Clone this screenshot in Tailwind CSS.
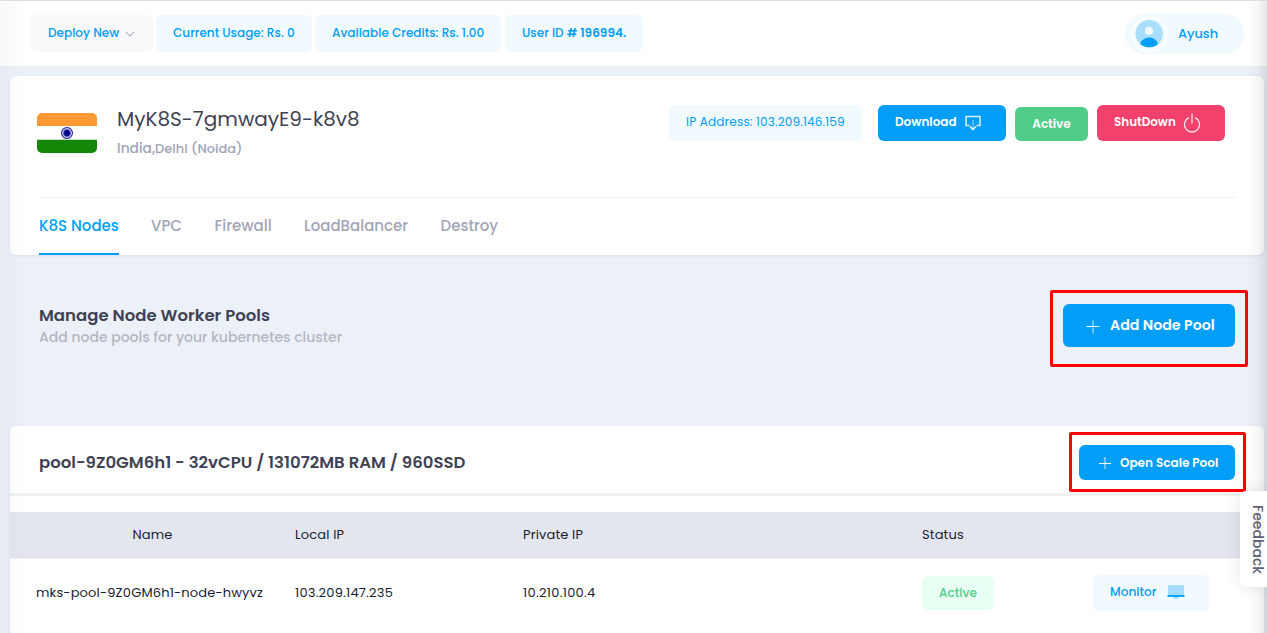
<!DOCTYPE html>
<html lang="en">
<head>
<meta charset="utf-8">
<title>Kubernetes cluster</title>
<script src="https://cdn.jsdelivr.net/npm/@tailwindcss/browser@4"></script>
</head>
<body class="relative flex h-[633px] w-[1267px] flex-col overflow-hidden bg-[#ecf1f8] font-[Poppins,Inter,sans-serif] text-[13px] whitespace-nowrap text-[#181c32]">

<header class="flex h-[66px] shrink-0 justify-between border-t border-[#dedede] bg-white pr-[23px] pl-[30px] text-[12.050px] font-medium text-[#009ef7]">
  <div class="flex pt-[14px]">
    <button class="mr-[3px] flex h-[37px] w-[123px] items-center rounded-md bg-[#f8f9fb] pb-px pl-[18px]">Deploy New
      <svg class="mt-[2px] ml-[6px] h-[6px] w-[10px]" viewBox="0 0 10 6" fill="none" stroke="#b3b6c9" stroke-width="1.1"><path d="M.7.8 5 4.9 9.3.8"/></svg>
    </button>
    <div class="mr-[3px] flex h-[37px] w-[156px] items-center rounded-md bg-[#f1faff] pb-px pl-[17px]">Current Usage: Rs. 0</div>
    <div class="mr-[4px] flex h-[37px] w-[186px] items-center rounded-md bg-[#f1faff] pb-px pl-[17px]">Available Credits: Rs. 1.00</div>
    <div class="flex h-[37px] w-[138px] items-center rounded-md bg-[#f1faff] pb-px pl-[17px]">User ID<span class="ml-[3px] font-semibold"># 196994.</span></div>
  </div>
  <div class="mt-[13px] flex h-[40px] w-[119px] items-center rounded-full bg-[#f1faff] pl-[6px]">
    <svg class="h-[37px] w-[37px]" viewBox="0 0 37 37"><circle cx="18.5" cy="18.5" r="18.2" fill="#fbfeff"/><circle cx="18.5" cy="18.5" r="15.8" fill="#f1faff"/><circle cx="18.2" cy="17.700" r="13.7" fill="#a9defc"/><circle cx="18" cy="14.900" r="4.2" fill="#f1faff"/><path d="M9.2 27.900c1.4-3.900 4.900-6.300 8.900-6.300s7.700 2.400 9 6.300a13.700 13.700 0 0 1-17.900 0z" fill="#009ef7"/></svg>
    <span class="ml-[10px] pb-px text-[12.9px]">Ayush</span>
  </div>
</header>

<section class="mt-[10px] mr-[3px] ml-[10px] h-[179px] shrink-0 rounded-md bg-white pr-[29px] pl-[27px] shadow-[0_1px_3px_rgba(60,70,120,0.1)]">
  <div class="flex h-[121px] items-start">
    <svg class="mt-[37px] h-[40px] w-[60px] overflow-hidden rounded-[5px]" viewBox="0 0 60 40"><path fill="#fff" d="M0 0h60v40H0z"/><path fill="#ff9933" d="M0 0h60v13H0z"/><path fill="#138808" d="M0 26.700h60V40H0z"/><circle cx="30" cy="20" r="5.400" fill="#fff" stroke="#20209a" stroke-width="1.200"/><circle cx="30" cy="20" r="4" fill="#5b5bb7"/><circle cx="30" cy="20" r="2.900" fill="#000088"/></svg>
    <div class="ml-[20px] flex flex-col">
      <h1 class="mt-[28px] h-[30px] text-[20px] leading-[30px] font-normal text-[#3f4254]">MyK8S-7gmwayE9-k8v8</h1>
      <p class="mt-[5px] h-[20px] text-[13px] leading-[20px] font-medium text-[#a1a5b7]"><span class="text-[13.800px]">India,</span>Delhi (Noida)</p>
    </div>
    <div class="ml-auto flex items-end pt-[29px] pr-[10px] text-[12px] font-semibold text-white">
      <div class="mr-[16px] flex h-[36px] w-[193px] items-center rounded-md bg-[#f1faff] pb-px pl-[17px] text-[12.100px] font-normal tracking-[0.150px] text-[#009ef7]">IP Address: 103.209.146.159</div>
      <button class="mr-[9px] flex h-[36px] w-[128px] items-center rounded-md bg-[#009ef7] pb-[2px] pl-[17px]">Download
        <svg class="mt-px ml-[8px] h-[16px] w-[16px]" viewBox="0 0 16 16" fill="none" stroke="#fff" stroke-width="1.500"><path d="M4.500 10.500H1V1.500h14v9h-3.500" stroke-opacity=".85" stroke-linejoin="round"/><path d="M8 4.500v9" stroke-opacity=".4"/><path d="m5 11.500 3 3 3-3"/></svg>
      </button>
      <div class="mr-[9px] flex h-[34px] w-[73px] items-center justify-center rounded-md bg-[#50cd89]">Active</div>
      <button class="flex h-[36px] w-[128px] items-center rounded-md bg-[#f1416c] pb-[2px] pl-[17px] text-[11.950px]">ShutDown
        <svg class="mt-[2px] ml-[7px] h-[20px] w-[18px]" viewBox="0 0 18 20" fill="none" stroke="#fff" stroke-width="1.200"><path d="M9 .5v10M6 4.600a7.500 7.500 0 1 0 6 0" stroke-opacity=".9"/></svg>
      </button>
    </div>
  </div>
  <nav class="ml-[2px] flex h-[58px] border-t border-[#eff0f2] text-[15px] leading-[56px] font-medium text-[#a1a5b7]">
    <a class="mr-[32px] w-[80px] border-b-2 border-[#009ef7] text-[#009ef7]">K8S Nodes</a>
    <a class="mr-[32.500px] w-[31px]">VPC</a>
    <a class="mr-[32px] w-[57.500px]">Firewall</a>
    <a class="mr-[32.500px] w-[104px]">LoadBalancer</a>
    <a class="w-[58px]">Destroy</a>
  </nav>
</section>

<section class="flex h-[171px] shrink-0 items-start justify-between pr-[32px] pl-[39px]">
  <div class="pt-[48px]">
    <h2 class="h-[24px] text-[16.550px] leading-[25px] font-semibold text-[#3f4254]">Manage Node Worker Pools</h2>
    <p class="h-[20px] text-[14px] leading-[20px] font-medium text-[#b5b5c3]">Add node pools for your kubernetes cluster</p>
  </div>
  <div class="relative mt-[49px]">
    <button class="flex h-[43px] w-[172px] items-center rounded-md bg-[#009ef7] pl-[23px] text-[14.200px] font-semibold text-white">
      <svg class="mt-[2px] mr-[10px] h-[14px] w-[14px]" viewBox="0 0 14 14" stroke="#fff"><path d="M7 .5v13" stroke-width="1.400" stroke-opacity=".6"/><path d="M.5 6.500h13"/></svg>Add Node Pool
    </button>
    <div class="absolute -top-[14px] -left-[13px] h-[77px] w-[198px] rounded-[2px] border-3 border-[#ff0000]"></div>
  </div>
</section>

<section class="mr-[3px] ml-[10px] h-[207px] shrink-0 rounded-t-md rounded-b-[2px] bg-white shadow-[0_1px_3px_rgba(60,70,120,0.1)]">
  <div class="flex h-[70px] items-start justify-between border-b-3 border-[#eff2f5] pr-[29px] pl-[29px]">
    <h3 class="pt-[24px] text-[16.550px] leading-[25px] font-semibold text-[#3f4254]">pool-9Z0GM6h1 - 32vCPU / 131072MB RAM / 960SSD</h3>
    <div class="relative mt-[19px]">
      <button class="flex h-[35px] w-[156px] items-center rounded-md bg-[#009ef7] pt-px pl-[20px] text-[12.050px] font-semibold text-white">
        <svg class="mr-[9px] h-[12px] w-[12px]" viewBox="0 0 12 12" stroke="#fff"><path d="M6 0v12" stroke-width="1.400" stroke-opacity=".6"/><path d="M0 6.500h12"/></svg>Open Scale Pool
      </button>
      <div class="absolute -top-[13px] -left-[10px] h-[60px] w-[177px] rounded-[2px] border-3 border-[#ff0000]"></div>
    </div>
  </div>
  <div class="mt-[16px] grid h-[47px] grid-cols-[285px_228px_399px_171px_1fr] items-center border-b border-[#eff2f5] bg-[#e3e6ef] tracking-[0.150px]">
    <div class="pb-px text-center">Name</div>
    <div class="pb-px">Local IP</div>
    <div class="pb-px">Private IP</div>
    <div class="pb-px">Status</div>
    <div></div>
  </div>
  <div class="grid h-[68px] grid-cols-[259px_228px_399px_171px_1fr] items-center pl-[26px]">
    <div class="tracking-[0.160px]">mks-pool-9Z0GM6h1-node-hwyvz</div>
    <div class="tracking-[0.220px]">103.209.147.235</div>
    <div class="tracking-[0.300px]">10.210.100.4</div>
    <div><span class="flex h-[34px] w-[72px] items-center justify-center rounded-md bg-[#e8fff3] text-[12.100px] font-medium text-[#50cd89]">Active</span></div>
    <button class="flex h-[36px] w-[116px] items-center rounded-md bg-[#f1faff] pb-[2px] pl-[17px] text-[12.150px] font-medium text-[#009ef7]">Monitor
      <svg class="ml-[11px] h-[14px] w-[18px]" viewBox="0 0 18 14"><path fill="#a5dcfa" d="M1 0h16v10H1z"/><path fill="#12a4f7" d="M.5 10h17v1.500q0 .5-.5.500H1q-.5 0-.5-.500z"/><path fill="#a5dcfa" d="M6.500 12h5v1.800h-5z"/></svg>
    </button>
  </div>
</section>

<div class="pointer-events-none absolute top-px bottom-0 left-0 w-[26px] bg-linear-to-r from-[#30305a]/3 to-transparent"></div>
<div class="pointer-events-none absolute top-px right-0 bottom-0 w-[20px] bg-linear-to-l from-black/10 via-black/3 to-transparent"></div>
<button class="absolute top-[491px] right-0 flex h-[96px] w-[27px] items-center justify-center rounded-l-md bg-white pt-px pl-[7px] text-[14px] font-medium text-[#5e6278] shadow-[0_0_16px_rgba(0,0,0,0.1)] [writing-mode:vertical-rl]">Feedback</button>
</body>
</html>
